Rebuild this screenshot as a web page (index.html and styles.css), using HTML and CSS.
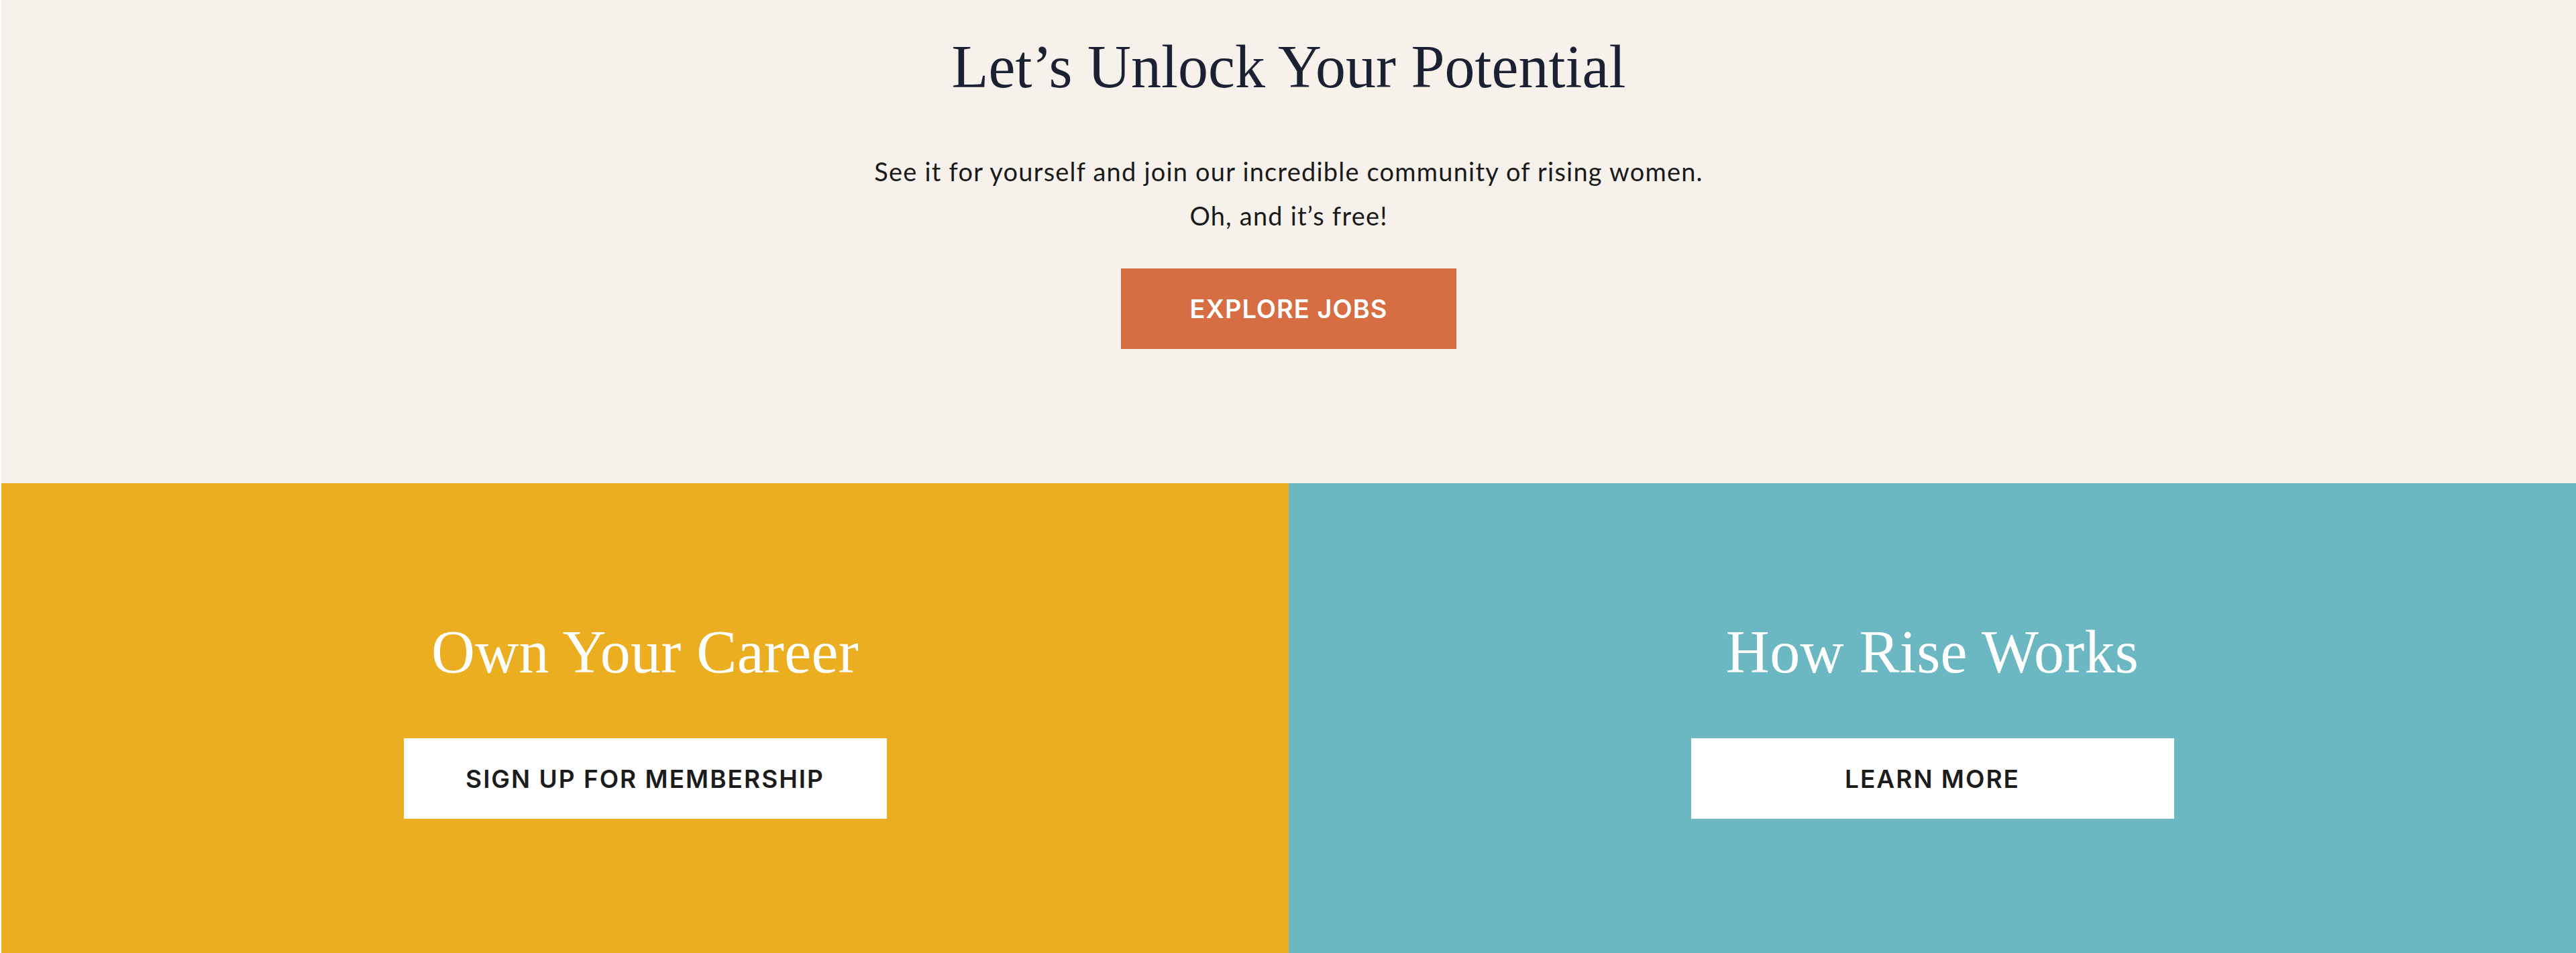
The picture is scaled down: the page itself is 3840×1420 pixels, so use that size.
FILE: index.html
```html
<!DOCTYPE html>
<html lang="en">
<head>
<meta charset="utf-8">
<title>Let’s Unlock Your Potential</title>
<link rel="stylesheet" href="styles.css">
</head>
<body>
<main class="page">
  <section class="hero">
    <h1 class="hero-title">Let’s Unlock Your Potential</h1>
    <p class="hero-text">See it for yourself and join our incredible community of rising women.<br>Oh, and it’s free!</p>
    <a class="btn btn-orange" href="#">EXPLORE JOBS</a>
  </section>
  <section class="panels">
    <div class="panel panel-yellow">
      <h2 class="panel-title">Own Your Career</h2>
      <a class="btn btn-white" href="#">SIGN UP FOR MEMBERSHIP</a>
    </div>
    <div class="panel panel-teal">
      <h2 class="panel-title">How Rise Works</h2>
      <a class="btn btn-white" href="#">LEARN MORE</a>
    </div>
  </section>
</main>
</body>
</html>
```

FILE: styles.css
```css
html, body {
  margin: 0;
  padding: 0;
  background: #ffffff;
}

body {
  padding-left: 2px;
  overflow: hidden;
}

.page {
  display: flex;
  flex-direction: column;
}

.hero {
  background: #f6f1eb;
  height: 720px;
  box-sizing: border-box;
  padding-top: 55px;
  display: flex;
  flex-direction: column;
  align-items: center;
}

.hero-title {
  margin: 0;
  font-family: "Liberation Serif", "Times New Roman", serif;
  font-weight: 400;
  font-size: 90px;
  line-height: 90px;
  color: #1c2033;
  letter-spacing: 0;
}

.hero-text {
  margin: 77px 0 0;
  font-family: Lato, "Liberation Sans", sans-serif;
  font-size: 38px;
  line-height: 66px;
  letter-spacing: 1.2px;
  color: #1a1a1a;
  text-align: center;
}

.btn {
  display: flex;
  align-items: center;
  justify-content: center;
  height: 120px;
  text-decoration: none;
  font-family: Inter, "Liberation Sans", sans-serif;
  font-weight: 600;
  font-size: 38px;
}

.btn-orange {
  margin-top: 46px;
  width: 500px;
  background: #d66d43;
  color: #ffffff;
  letter-spacing: 1px;
}

.panels {
  display: grid;
  grid-template-columns: 1fr 1fr;
  height: 700px;
}

.panel {
  display: flex;
  flex-direction: column;
  align-items: center;
  padding-top: 207px;
  box-sizing: border-box;
}

.panel-yellow {
  background: #ebae20;
}

.panel-teal {
  background: #6cb8c2;
}

.panel-title {
  margin: 0;
  font-family: "Liberation Serif", "Times New Roman", serif;
  font-weight: 400;
  font-size: 90px;
  line-height: 90px;
  color: #ffffff;
  letter-spacing: 0.3px;
}

.btn-white {
  margin-top: 83px;
  width: 720px;
  background: #ffffff;
  color: #1c1c1c;
  font-size: 37px;
  letter-spacing: 2px;
}
```
